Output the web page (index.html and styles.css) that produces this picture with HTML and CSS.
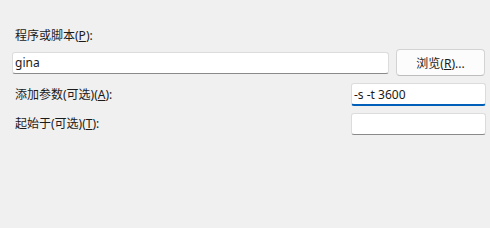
FILE: index.html
```html
<!DOCTYPE html>
<html lang="zh-CN">
<head>
    <meta charset="UTF-8">
    <title>操作</title>
    <link rel="stylesheet" href="styles.css">
</head>
<body>
    <form class="action-form">
        <div class="field-label top-label">程序或脚本(<u>P</u>):</div>
        <div class="browse-row">
            <input class="text-input program-input" type="text" value="gina">
            <button type="button" class="browse-btn">浏览(<u>R</u>)...</button>
        </div>
        <div class="option-row">
            <div class="field-label">添加参数(可选)(<u>A</u>):</div>
            <input class="text-input side-input focused" type="text" value="-s -t 3600">
        </div>
        <div class="option-row">
            <div class="field-label">起始于(可选)(<u>T</u>):</div>
            <input class="text-input side-input" type="text" value="">
        </div>
    </form>
</body>
</html>
```

FILE: styles.css
```css
body {
    margin: 0;
    padding: 0;
    background-color: #f0f0f0;
    font-family: "Noto Sans", "Noto Sans CJK SC", sans-serif;
    font-size: 12px;
    color: #1a1a1a;
}
.action-form {
    padding: 28px 4px 0 12px;
}
.field-label {
    padding-left: 3px;
    line-height: 16px;
}
.top-label {
    margin-bottom: 5px;
}
.browse-row {
    display: flex;
    align-items: center;
    height: 27px;
}
.text-input {
    box-sizing: border-box;
    height: 22px;
    padding: 0 2px;
    border: 1px solid #dcdcdc;
    border-bottom-color: #8a8a8a;
    border-radius: 3px;
    background-color: white;
    font-family: "Noto Sans", "Noto Sans CJK SC", sans-serif;
    font-size: 12px;
    color: #1a1a1a;
    outline: none;
}
.program-input {
    width: 377px;
}
.browse-btn {
    box-sizing: border-box;
    width: 89px;
    height: 27px;
    margin-left: 7px;
    border: 1px solid #d3d3d3;
    border-bottom-color: #bdbdbd;
    border-radius: 4px;
    background-color: #fcfcfc;
    font-family: "Noto Sans", "Noto Sans CJK SC", sans-serif;
    font-size: 12px;
    color: #1a1a1a;
}
.option-row {
    display: flex;
    align-items: center;
    justify-content: space-between;
    margin-top: 7px;
}
.side-input {
    width: 135px;
}
.focused {
    height: 23px;
    border-bottom: 2px solid #005fb8;
}
```
